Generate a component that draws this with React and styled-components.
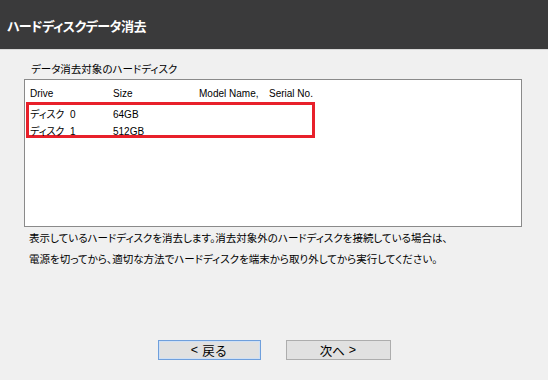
import React from 'react'
import styled, { createGlobalStyle } from 'styled-components'

const Global = createGlobalStyle`
  html, body {
    margin: 0;
    padding: 0;
    background: #f0f0f0;
  }
  body {
    font-family: "Liberation Sans", "Noto Sans CJK JP", sans-serif;
    color: #000;
  }
`

const Page = styled.div`
  width: 548px;
  height: 380px;
  display: flex;
  flex-direction: column;
  background: #f0f0f0;
  overflow: hidden;
`

const TitleBar = styled.div`
  height: 50px;
  flex: none;
  display: flex;
  align-items: center;
  padding-left: 7px;
  background: #3a3a3b;
  border-bottom: 1px solid #d8d8d8;
  box-sizing: border-box;
  color: #fff;
  font-size: 13px;
  letter-spacing: -0.5px;
  font-weight: bold;
  font-feature-settings: "palt";
  padding-top: 2px;
`

const Content = styled.div`
  flex: 1;
  display: flex;
  flex-direction: column;
  padding: 13px 26px 20px 24px;
`

const Label = styled.div`
  font-size: 10.5px;
  line-height: 12px;
  padding-left: 7px;
  font-feature-settings: "palt";
`

const ListBox = styled.div`
  margin-top: 4px;
  height: 139px;
  background: #fff;
  border: 1px solid #8a8a8a;
  padding-top: 7px;
`

const Row = styled.div`
  display: grid;
  grid-template-columns: ${(p) => p.$first}px 86px 70px auto;
  font-size: 10px;
  line-height: ${(p) => p.$h}px;
  height: ${(p) => p.$h}px;
  padding-left: ${(p) => p.$pad}px;
  white-space: pre;
  font-feature-settings: "palt";
`

const Highlight = styled.div`
  margin: 1px 0 0 1px;
  padding-top: 1px;
  width: 283px;
  height: 29px;
  border: 3px solid #e8202a;
`

const Notice = styled.div`
  margin-top: 1px;
  padding-left: 5px;
  font-size: 10.5px;
  line-height: 21px;
  font-feature-settings: "palt";
`

const Buttons = styled.div`
  margin-top: auto;
  display: flex;
  justify-content: center;
  gap: 25px;
  padding-left: 2px;
`

const Button = styled.button`
  width: ${(p) => p.$w}px;
  height: 20px;
  box-sizing: border-box;
  background: #e1e1e1;
  border: 1px solid ${(p) => (p.$focus ? '#6f9fdc' : '#adadad')};
  box-shadow: ${(p) => (p.$focus ? 'inset 0 0 0 1px #cfe0f5' : 'none')};
  font-family: "Liberation Sans", "Noto Sans CJK JP", sans-serif;
  font-size: 12.5px;
  color: #000;
  padding: 0;
  display: flex;
  align-items: center;
  justify-content: center;
  gap: 4px;
`

const disks = [
  { drive: 'ディスク  0', size: '64GB' },
  { drive: 'ディスク  1', size: '512GB' },
]

export default function App() {
  return (
    <>
      <Global />
      <Page>
        <TitleBar>ハードディスクデータ消去</TitleBar>
        <Content>
          <Label>データ消去対象のハードディスク</Label>
          <ListBox>
            <Row $first={83} $h={14} $pad={5}>
              <span>Drive</span>
              <span>Size</span>
              <span>Model Name,</span>
              <span>Serial No.</span>
            </Row>
            <Highlight>
              {disks.map((d) => (
                <Row key={d.drive} $first={83} $h={17} $pad={1}>
                  <span>{d.drive}</span>
                  <span>{d.size}</span>
                  <span />
                  <span />
                </Row>
              ))}
            </Highlight>
          </ListBox>
          <Notice>
            表示しているハードディスクを消去します。消去対象外のハードディスクを接続している場合は、
            <br />
            電源を切ってから、適切な方法でハードディスクを端末から取り外してから実行してください。
          </Notice>
          <Buttons>
            <Button $w={103} $focus>
              <span>&lt;</span>
              <span>戻る</span>
            </Button>
            <Button $w={105}>
              <span>次へ</span>
              <span>&gt;</span>
            </Button>
          </Buttons>
        </Content>
      </Page>
    </>
  )
}
